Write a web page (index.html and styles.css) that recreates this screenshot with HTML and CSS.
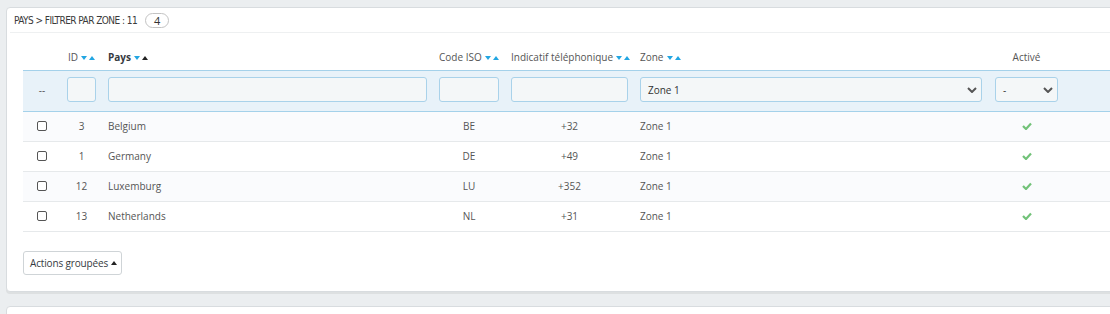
FILE: index.html
```html
<!DOCTYPE html>
<html lang="fr">
<head>
<meta charset="utf-8">
<title>Pays</title>
<link rel="stylesheet" href="styles.css">
</head>
<body>
<div class="page">
  <section class="panel">
    <header class="panel-heading">
      <span class="title">Pays &gt; Filtrer par zone : 11</span>
      <span class="badge">4</span>
    </header>
    <div class="panel-body">
      <table class="grid">
        <colgroup>
          <col class="c-check"><col class="c-id"><col class="c-name"><col class="c-iso"><col class="c-call"><col class="c-zone"><col class="c-active"><col class="c-rest">
        </colgroup>
        <thead>
          <tr class="heads">
            <th></th>
            <th class="center">ID<span class="sort"><i class="down"></i><i class="up"></i></span></th>
            <th class="strong">Pays<span class="sort"><i class="down"></i><i class="up on"></i></span></th>
            <th>Code ISO<span class="sort"><i class="down"></i><i class="up"></i></span></th>
            <th>Indicatif téléphonique<span class="sort"><i class="down"></i><i class="up"></i></span></th>
            <th>Zone<span class="sort"><i class="down"></i><i class="up"></i></span></th>
            <th class="center">Activé</th>
            <th></th>
          </tr>
          <tr class="filters">
            <td class="center">--</td>
            <td><span class="field"></span></td>
            <td><span class="field"></span></td>
            <td><span class="field"></span></td>
            <td><span class="field"></span></td>
            <td><span class="field select"><span>Zone 1</span><svg class="chev" viewBox="0 0 10 6" width="10" height="6"><path d="M1 1 L5 5 L9 1" fill="none" stroke="#555" stroke-width="2"/></svg></span></td>
            <td class="pad7"><span class="field select"><span>-</span><svg class="chev" viewBox="0 0 10 6" width="10" height="6"><path d="M1 1 L5 5 L9 1" fill="none" stroke="#555" stroke-width="2"/></svg></span></td>
            <td></td>
          </tr>
        </thead>
        <tbody>
          <tr>
            <td class="center"><span class="box"></span></td>
            <td class="center">3</td>
            <td>Belgium</td>
            <td class="center">BE</td>
            <td class="center">+32</td>
            <td>Zone 1</td>
            <td class="center"><svg class="ok" viewBox="0 0 10 8" width="10" height="8"><path d="M1 4 L4 7 L9 1.5" fill="none" stroke="#72c279" stroke-width="2.2"/></svg></td>
            <td></td>
          </tr>
          <tr>
            <td class="center"><span class="box"></span></td>
            <td class="center">1</td>
            <td>Germany</td>
            <td class="center">DE</td>
            <td class="center">+49</td>
            <td>Zone 1</td>
            <td class="center"><svg class="ok" viewBox="0 0 10 8" width="10" height="8"><path d="M1 4 L4 7 L9 1.5" fill="none" stroke="#72c279" stroke-width="2.2"/></svg></td>
            <td></td>
          </tr>
          <tr>
            <td class="center"><span class="box"></span></td>
            <td class="center">12</td>
            <td>Luxemburg</td>
            <td class="center">LU</td>
            <td class="center">+352</td>
            <td>Zone 1</td>
            <td class="center"><svg class="ok" viewBox="0 0 10 8" width="10" height="8"><path d="M1 4 L4 7 L9 1.5" fill="none" stroke="#72c279" stroke-width="2.2"/></svg></td>
            <td></td>
          </tr>
          <tr>
            <td class="center"><span class="box"></span></td>
            <td class="center">13</td>
            <td>Netherlands</td>
            <td class="center">NL</td>
            <td class="center">+31</td>
            <td>Zone 1</td>
            <td class="center"><svg class="ok" viewBox="0 0 10 8" width="10" height="8"><path d="M1 4 L4 7 L9 1.5" fill="none" stroke="#72c279" stroke-width="2.2"/></svg></td>
            <td></td>
          </tr>
        </tbody>
      </table>
      <button class="bulk" type="button">Actions groupées <i class="caret"></i></button>
    </div>
  </section>
  <section class="panel panel-next"></section>
</div>
</body>
</html>
```

FILE: styles.css
```css
* { box-sizing: border-box; }
html, body { margin: 0; padding: 0; }
body {
  background: #ebeef0;
  font-family: "Open Sans", "Liberation Sans", sans-serif;
  font-size: 10px;
  color: #555;
  overflow: hidden;
  width: 1110px;
  height: 314px;
}
.page {
  padding: 7px 0 0 6px;
  width: 1300px;
}
.panel {
  background: #fff;
  border: 1px solid #d8dcdf;
  border-radius: 4px;
  box-shadow: 0 2px 0 rgba(0, 0, 0, 0.06);
  width: 1200px;
}
.panel-heading {
  display: flex;
  align-items: center;
  height: 25px;
  margin-left: 3px;
  padding-left: 4px;
  border-bottom: 1px solid #eef0f1;
}
.title {
  font-family: "DejaVu Sans Condensed", "Liberation Sans Narrow", sans-serif;
  font-size: 10px;
  letter-spacing: -0.55px;
  text-transform: uppercase;
  color: #3a3a3a;
}
.badge {
  margin-left: 8px;
  width: 24px;
  height: 15px;
  border: 1px solid #c3c3c3;
  border-radius: 8px;
  display: flex;
  align-items: center;
  justify-content: center;
  font-size: 11px;
  color: #333;
}
.panel-body {
  padding: 12px 0 16px 16px;
}
.grid {
  border-collapse: collapse;
  table-layout: fixed;
  width: 1160px;
}
.c-check { width: 38px; }
.c-id { width: 41px; }
.c-name { width: 331px; }
.c-iso { width: 72px; }
.c-call { width: 129px; }
.c-zone { width: 354px; }
.c-active { width: 77px; }
.c-rest { width: 118px; }
.grid th, .grid td {
  padding: 0 6px;
  text-align: left;
  white-space: nowrap;
  vertical-align: middle;
}
.grid th {
  height: 25px;
  font-weight: normal;
  color: #555;
  overflow: visible;
}
.grid th.strong { font-weight: bold; color: #363a41; }
.grid .center { text-align: center; }
.sort {
  display: inline-flex;
  align-items: center;
  gap: 2px;
  margin-left: 3px;
  vertical-align: 1px;
}
.sort i {
  display: block;
  width: 0;
  height: 0;
  border-left: 3px solid transparent;
  border-right: 3px solid transparent;
}
.sort .down { border-top: 4px solid #22a6e2; }
.sort .up { border-bottom: 4px solid #22a6e2; }
.sort .up.on { border-bottom-color: #222; }
.filters td {
  background: #e8f2f9;
  border-top: 1px solid #a4d1ea;
  border-bottom: 1px solid #a4d1ea;
  height: 41px;
  padding-top: 6px;
  padding-bottom: 8px;
}
.filters td.pad7 { padding-left: 7px; padding-right: 7px; }
.field {
  display: flex;
  align-items: center;
  justify-content: space-between;
  height: 25px;
  width: 100%;
  background: #f4f7f8;
  border: 1px solid #a9d2ea;
  border-radius: 3px;
  padding: 0 3px 0 7px;
  color: #333;
}
.field .chev { margin-right: 1px; }
tbody td {
  height: 30px;
  border-bottom: 1px solid #e6e9eb;
}
tbody tr:nth-child(odd) td { background: #fafbfd; }
.box {
  display: inline-block;
  width: 10px;
  height: 10px;
  border: 1px solid #555;
  border-radius: 2px;
  background: #fff;
  vertical-align: middle;
  margin-top: -3px;
}
.ok { display: inline-block; vertical-align: middle; margin-top: -3px; }
.bulk {
  margin-top: 19px;
  height: 24px;
  background: #fff;
  border: 1px solid #cfd4d7;
  border-radius: 3px;
  font-family: "Open Sans", "Liberation Sans", sans-serif;
  font-size: 10px;
  letter-spacing: -0.15px;
  color: #363a41;
  padding: 0 4px 0 6px;
  white-space: nowrap;
  display: inline-flex;
  align-items: center;
  gap: 3px;
}
.bulk .caret {
  display: inline-block;
  width: 0;
  height: 0;
  border-left: 3px solid transparent;
  border-right: 3px solid transparent;
  border-bottom: 4px solid #222;
}
.panel-next {
  margin-top: 14px;
  height: 40px;
}
```
